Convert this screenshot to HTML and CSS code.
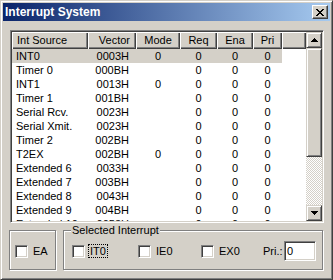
FILE: index.html
```html
<!DOCTYPE html>
<html lang="en">
<head>
    <meta charset="UTF-8">
    <title>Interrupt System</title>
    <link rel="stylesheet" href="styles.css">
</head>
<body>
    <div class="window">
        <div class="titlebar">
            <span class="title">Interrupt System</span>
            <div class="close-btn">
                <svg width="8" height="7" viewBox="0 0 8 7" shape-rendering="crispEdges">
                    <path d="M0 0h2v1h-2z M6 0h2v1h-2z M1 1h2v1h-2z M5 1h2v1h-2z M2 2h4v1h-4z M3 3h2v1h-2z M2 4h4v1h-4z M1 5h2v1h-2z M5 5h2v1h-2z M0 6h2v1h-2z M6 6h2v1h-2z" fill="#000"/>
                </svg>
            </div>
        </div>
        <div class="content">
            <div class="listview">
                <div class="lv-main">
                    <div class="lv-header">
                        <div class="hcell left">Int Source</div>
                        <div class="hcell right">Vector</div>
                        <div class="hcell">Mode</div>
                        <div class="hcell">Req</div>
                        <div class="hcell">Ena</div>
                        <div class="hcell">Pri</div>
                        <div class="hcell"></div>
                    </div>
                    <div class="lv-rows">
                        <div class="row selected"><span class="src">INT0</span><span class="vec">0003H</span><span>0</span><span>0</span><span>0</span><span>0</span></div>
                        <div class="row"><span class="src">Timer 0</span><span class="vec">000BH</span><span></span><span>0</span><span>0</span><span>0</span></div>
                        <div class="row"><span class="src">INT1</span><span class="vec">0013H</span><span>0</span><span>0</span><span>0</span><span>0</span></div>
                        <div class="row"><span class="src">Timer 1</span><span class="vec">001BH</span><span></span><span>0</span><span>0</span><span>0</span></div>
                        <div class="row"><span class="src">Serial Rcv.</span><span class="vec">0023H</span><span></span><span>0</span><span>0</span><span>0</span></div>
                        <div class="row"><span class="src">Serial Xmit.</span><span class="vec">0023H</span><span></span><span>0</span><span>0</span><span>0</span></div>
                        <div class="row"><span class="src">Timer 2</span><span class="vec">002BH</span><span></span><span>0</span><span>0</span><span>0</span></div>
                        <div class="row"><span class="src">T2EX</span><span class="vec">002BH</span><span>0</span><span>0</span><span>0</span><span>0</span></div>
                        <div class="row"><span class="src">Extended 6</span><span class="vec">0033H</span><span></span><span>0</span><span>0</span><span>0</span></div>
                        <div class="row"><span class="src">Extended 7</span><span class="vec">003BH</span><span></span><span>0</span><span>0</span><span>0</span></div>
                        <div class="row"><span class="src">Extended 8</span><span class="vec">0043H</span><span></span><span>0</span><span>0</span><span>0</span></div>
                        <div class="row"><span class="src">Extended 9</span><span class="vec">004BH</span><span></span><span>0</span><span>0</span><span>0</span></div>
                        <div class="row"><span class="src">Extended 10</span><span class="vec">0053H</span><span></span><span>0</span><span>0</span><span>0</span></div>
                    </div>
                </div>
                <div class="scrollbar">
                    <div class="sb-btn">
                        <svg width="7" height="4" viewBox="0 0 7 4" shape-rendering="crispEdges">
                            <path d="M3 0h1v1h-1z M2 1h3v1h-3z M1 2h5v1h-5z M0 3h7v1h-7z" fill="#000"/>
                        </svg>
                    </div>
                    <div class="sb-thumb"></div>
                    <div class="sb-track"></div>
                    <div class="sb-btn">
                        <svg width="7" height="4" viewBox="0 0 7 4" shape-rendering="crispEdges">
                            <path d="M0 0h7v1h-7z M1 1h5v1h-5z M2 2h3v1h-3z M3 3h1v1h-1z" fill="#000"/>
                        </svg>
                    </div>
                </div>
            </div>
            <div class="bottom">
                <div class="group ea-group">
                    <label class="check">
                        <span class="box"></span>
                        <span class="check-label">EA</span>
                    </label>
                </div>
                <div class="group sel-group">
                    <span class="group-label">Selected Interrupt</span>
                    <label class="check w1">
                        <span class="box"></span>
                        <span class="check-label focused">IT0</span>
                    </label>
                    <label class="check w2">
                        <span class="box"></span>
                        <span class="check-label">IE0</span>
                    </label>
                    <label class="check w3">
                        <span class="box"></span>
                        <span class="check-label">EX0</span>
                    </label>
                    <span class="pri-label">Pri.:</span>
                    <input class="edit" type="text" value="0">
                </div>
            </div>
        </div>
    </div>
</body>
</html>
```

FILE: styles.css
```css
body {
    margin: 0;
    font-family: "Liberation Sans", Arial, sans-serif;
    font-size: 11px;
    color: #000000;
}
.window {
    width: 333px;
    height: 280px;
    box-sizing: border-box;
    background-color: #d4d0c8;
    border: 1px solid;
    border-color: #d4d0c8 #404040 #404040 #d4d0c8;
    box-shadow: inset 1px 1px #ffffff, inset -1px -1px #808080;
    padding: 2px;
    display: flex;
    flex-direction: column;
}
.titlebar {
    height: 18px;
    display: flex;
    align-items: center;
    justify-content: space-between;
    padding: 0 2px;
    background: linear-gradient(to right, #0a246a, #a6caf0);
}
.title {
    color: #ffffff;
    font-weight: bold;
    font-size: 12px;
}
.close-btn {
    width: 16px;
    height: 14px;
    box-sizing: border-box;
    background-color: #d4d0c8;
    border: 1px solid;
    border-color: #ffffff #404040 #404040 #ffffff;
    box-shadow: inset -1px -1px #808080;
    display: flex;
    justify-content: center;
    align-items: center;
}
.content {
    flex: 1;
    padding: 9px 0 0 6px;
}
.listview {
    width: 314px;
    height: 193px;
    box-sizing: border-box;
    margin-left: 1px;
    border: 1px solid;
    border-color: #808080 #ffffff #ffffff #808080;
    box-shadow: inset 1px 1px #404040, inset -1px -1px #d4d0c8;
    padding: 1px;
    background-color: #ffffff;
    display: flex;
}
.lv-main {
    flex: 1;
    overflow: hidden;
}
.lv-header {
    display: grid;
    grid-template-columns: 76px 48px 44px 37px 36px 29px 24px;
    height: 17px;
    background-color: #d4d0c8;
}
.hcell {
    box-shadow: inset 1px 1px #ffffff, inset -1px -1px #404040, inset -2px -2px #808080;
    line-height: 17px;
    text-align: center;
    white-space: nowrap;
    overflow: hidden;
}
.hcell.left {
    text-align: left;
    padding-left: 5px;
}
.hcell.right {
    text-align: right;
    padding-right: 6px;
}
.row {
    display: grid;
    grid-template-columns: 76px 48px 44px 37px 36px 29px;
    width: 270px;
    height: 14px;
    line-height: 14px;
    text-align: center;
    white-space: nowrap;
}
.row.selected {
    background-color: #d4d0c8;
}
.row .src {
    text-align: left;
    padding-left: 4px;
}
.row .vec {
    text-align: right;
    padding-right: 7px;
}
.scrollbar {
    width: 16px;
    display: flex;
    flex-direction: column;
}
.sb-btn, .sb-thumb {
    box-sizing: border-box;
    background-color: #d4d0c8;
    border: 1px solid;
    border-color: #d4d0c8 #404040 #404040 #d4d0c8;
    box-shadow: inset 1px 1px #ffffff, inset -1px -1px #808080;
}
.sb-btn {
    height: 16px;
    display: flex;
    justify-content: center;
    align-items: center;
}
.sb-thumb {
    height: 109px;
}
.sb-track {
    flex: 1;
    background: repeating-conic-gradient(#d4d0c8 0 25%, #ffffff 0 50%) 0 0 / 2px 2px;
}
.bottom {
    display: flex;
    margin-top: 7px;
}
.group {
    position: relative;
    height: 40px;
    box-sizing: border-box;
    border: 1px solid #808080;
    box-shadow: inset 1px 1px #ffffff, 1px 1px #ffffff;
    padding-top: 2px;
    display: flex;
    align-items: center;
}
.ea-group {
    width: 47px;
    padding-left: 5px;
}
.sel-group {
    width: 260px;
    margin-left: 7px;
    padding-left: 8px;
}
.group-label {
    position: absolute;
    top: -7px;
    left: 7px;
    padding: 0 1px;
    line-height: 13px;
    background-color: #d4d0c8;
}
.check {
    display: flex;
    align-items: center;
}
.check.w1 { width: 66px; }
.check.w2 { width: 63px; }
.check.w3 { width: 62px; }
.box {
    width: 13px;
    height: 13px;
    box-sizing: border-box;
    background-color: #ffffff;
    border: 1px solid;
    border-color: #808080 #ffffff #ffffff #808080;
    box-shadow: inset 1px 1px #404040, inset -1px -1px #d4d0c8;
}
.check-label {
    margin-left: 3px;
    padding: 0 1px;
    line-height: 12px;
    border: 1px solid transparent;
}
.check-label.focused {
    border: 1px dotted #000000;
}
.pri-label {
    width: 21px;
}
.edit {
    width: 32px;
    height: 20px;
    box-sizing: border-box;
    margin: 0;
    padding: 0 2px;
    font-family: "Liberation Sans", Arial, sans-serif;
    font-size: 11px;
    color: #000000;
    background-color: #ffffff;
    border: 1px solid;
    border-color: #808080 #ffffff #ffffff #808080;
    box-shadow: inset 1px 1px #404040, inset -1px -1px #d4d0c8;
    outline: none;
}
```
